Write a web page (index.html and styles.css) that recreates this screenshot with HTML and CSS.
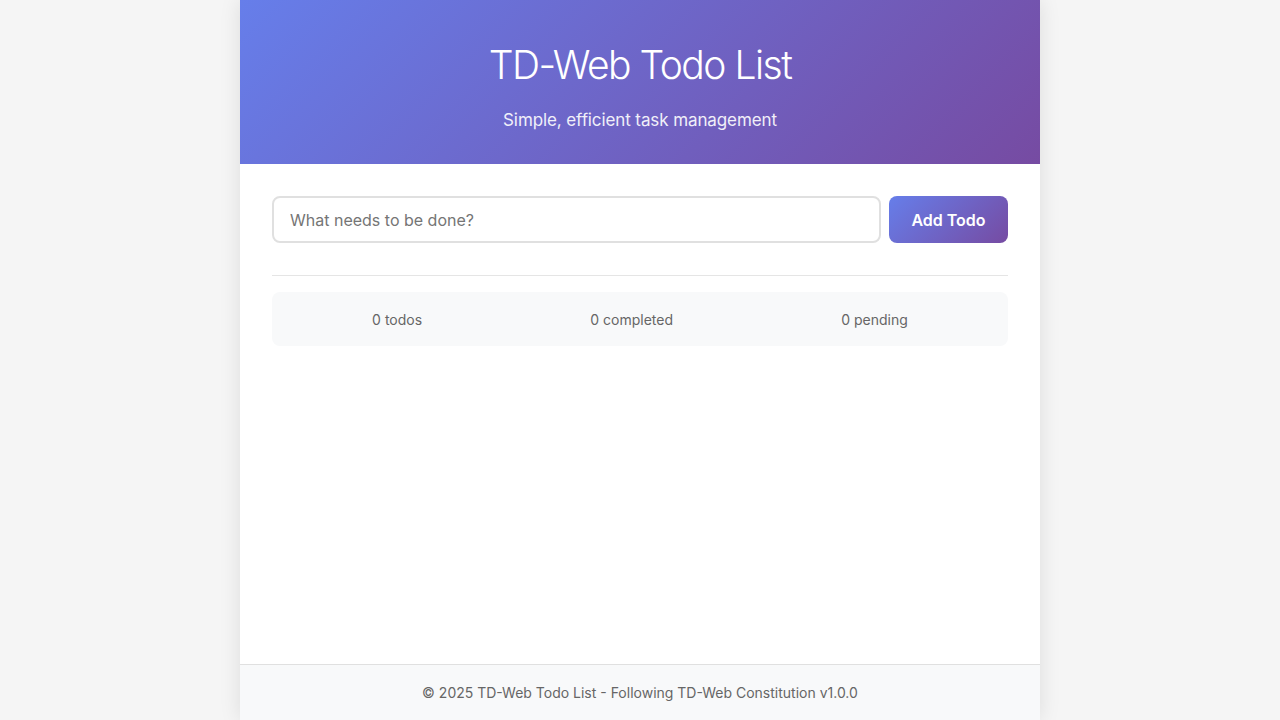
FILE: index.html
```html
<!DOCTYPE html>
<html lang="en">
<head>
<meta charset="utf-8">
<title>TD-Web Todo List</title>
<link rel="stylesheet" href="styles.css">
</head>
<body>
<div class="app">
  <header class="header">
    <h1 class="title">TD-Web Todo List</h1>
    <p class="subtitle">Simple, efficient task management</p>
  </header>
  <main class="main">
    <form class="todo-form" onsubmit="return false">
      <input class="todo-input" type="text" placeholder="What needs to be done?">
      <button class="add-btn" type="submit">Add Todo</button>
    </form>
    <ul class="todo-list"></ul>
    <div class="stats">
      <span class="stat">0 todos</span>
      <span class="stat">0 completed</span>
      <span class="stat">0 pending</span>
    </div>
  </main>
  <footer class="footer">© 2025 TD-Web Todo List - Following TD-Web Constitution v1.0.0</footer>
</div>
</body>
</html>
```
FILE: styles.css
```css
* { box-sizing: border-box; }
html, body { margin: 0; padding: 0; }
body {
  background: #f5f5f5;
  font-family: Inter, "Noto Sans", "Liberation Sans", sans-serif;
  color: #333;
}
.app {
  width: 800px;
  margin: 0 auto;
  min-height: 100vh;
  background: #fff;
  box-shadow: 0 0 20px rgba(0,0,0,0.1);
  display: flex;
  flex-direction: column;
}
.header {
  background: linear-gradient(135deg, #667eea 0%, #764ba2 100%);
  color: #fff;
  text-align: center;
  height: 164px;
  padding-top: 40px;
}
.title {
  margin: 0;
  font-size: 39px;
  font-weight: 300;
  line-height: 50px;
  letter-spacing: -1.5px;
}
.subtitle {
  margin: 19px 0 0;
  font-size: 17px;
  line-height: 22px;
  letter-spacing: -0.1px;
  opacity: 0.9;
}
.main {
  flex: 1;
  padding: 32px;
}
.todo-form {
  display: flex;
  gap: 8px;
  margin: 0 0 32px;
}
.todo-input {
  flex: 1;
  height: 47px;
  border: 2px solid #e0e0e0;
  border-radius: 8px;
  padding: 0 16px;
  font-family: inherit;
  font-size: 16px;
  color: #333;
  outline: none;
}
.todo-input::placeholder { color: #757575; }
.add-btn {
  width: 119px;
  height: 47px;
  border: none;
  border-radius: 8px;
  background: linear-gradient(135deg, #667eea 0%, #764ba2 100%);
  color: #fff;
  font-family: inherit;
  font-size: 16px;
  font-weight: 600;
}
.todo-list {
  list-style: none;
  margin: 0;
  padding: 0;
  border-top: 1px solid #e5e5e5;
}
.stats {
  margin-top: 16px;
  height: 54px;
  background: #f8f9fa;
  border-radius: 8px;
  display: flex;
  justify-content: space-around;
  align-items: center;
  padding: 0 16px;
  font-size: 14px;
  color: #666;
}
.footer {
  height: 56px;
  background: #f8f9fa;
  border-top: 1px solid #e0e0e0;
  display: flex;
  align-items: center;
  justify-content: center;
  font-size: 14px;
  color: #666;
}
```
